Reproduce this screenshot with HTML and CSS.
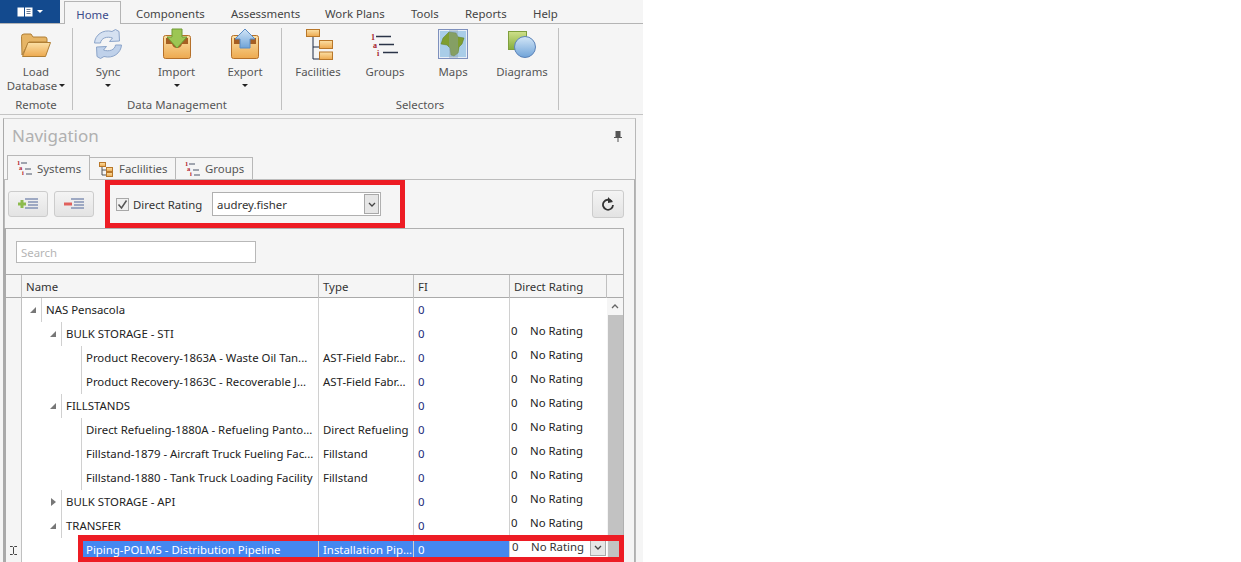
FILE: index.html
```html
<!DOCTYPE html>
<html>
  <head>
    <title>Navigation</title>
    <meta charset="UTF-8">
    <link rel="stylesheet" href="styles.css">
  </head>

  <body>
    <svg class="defs" width="0" height="0">
      <defs>
        <linearGradient id="gold" x1="0" y1="0" x2="0" y2="1">
          <stop offset="0" stop-color="#fbe0a6"/>
          <stop offset="1" stop-color="#eda94f"/>
        </linearGradient>
        <linearGradient id="sky" x1="0" y1="0" x2="0" y2="1">
          <stop offset="0" stop-color="#d3e6f7"/>
          <stop offset="1" stop-color="#6fa3d8"/>
        </linearGradient>
        <linearGradient id="leaf" x1="0" y1="0" x2="0" y2="1">
          <stop offset="0" stop-color="#cfe08a"/>
          <stop offset="1" stop-color="#84ad3d"/>
        </linearGradient>
        <symbol id="mini-list" viewBox="0 0 16 16">
          <text x="1" y="5" class="mini-num">1</text>
          <text x="3" y="10" class="mini-num">a</text>
          <text x="6" y="15" class="mini-num">i</text>
          <path d="M5 3h6M9 9h6M10 14h6" stroke="#4a5568" stroke-width="1" fill="none"/>
        </symbol>
        <symbol id="mini-tree" viewBox="0 0 16 16">
          <path d="M4 5v9h4M4 9h4" stroke="#555" fill="none"/>
          <rect x="1.5" y="1.5" width="6" height="4" fill="url(#gold)" stroke="#b8772a"/>
          <rect x="8.5" y="6.5" width="6" height="4" fill="url(#gold)" stroke="#b8772a"/>
          <rect x="8.5" y="11.5" width="6" height="4" fill="url(#gold)" stroke="#b8772a"/>
        </symbol>
      </defs>
    </svg>

    <div class="app">
      <div class="menu-bar">
        <div class="app-button">
          <svg width="16" height="10" viewBox="0 0 16 10">
            <rect x="0.5" y="0.5" width="15" height="9" fill="#fff"/>
            <path d="M7.5 0v10" stroke="#134a8e"/>
            <path d="M9.5 2.5h4M9.5 4.5h4M9.5 6.5h4" stroke="#6c7a90"/>
          </svg>
          <span class="arrow-white"></span>
        </div>
        <div class="menu-tab menu-tab-active">Home</div>
        <div class="menu-tab tab-components">Components</div>
        <div class="menu-tab tab-assessments">Assessments</div>
        <div class="menu-tab tab-plans">Work Plans</div>
        <div class="menu-tab tab-tools">Tools</div>
        <div class="menu-tab tab-reports">Reports</div>
        <div class="menu-tab tab-help">Help</div>
      </div>

      <div class="ribbon">
        <div class="group group-remote">
          <div class="group-buttons">
            <div class="rb rb-load">
              <svg class="rb-icon" viewBox="0 0 32 32">
                <path d="M2 27 1.500 8.500Q1.500 6 4 6h7l2 3h12q2 0 2 2v3H9z" fill="#e6b566" stroke="#b07f35"/>
                <path d="M2.500 28.500 8 14.500h22.500L25.500 28.500z" fill="url(#gold)" stroke="#b07f35"/>
              </svg>
              <div class="rb-label">Load</div>
              <div class="rb-label">Database<span class="arrow inline-arrow"></span></div>
            </div>
          </div>
          <div class="group-name">Remote</div>
        </div>

        <div class="group group-data">
          <div class="group-buttons">
            <div class="rb rb-sync">
              <svg class="rb-icon" viewBox="0 0 32 32">
                <path d="M2.500 15C3 7 11 1 20 3.500L23.500 1.500 27 3.500 27.500 13 17.500 13.500 20.500 10C15 8 9 10 8.500 15z" fill="#d5e1f1" stroke="#8ba4c9"/>
                <path d="M29.500 17C29 25 21 31 12 28.500L8.500 30.500 5 28.500 4.500 19 14.500 18.500 11.500 22C17 24 23 22 23.500 17z" fill="#bfd1ea" stroke="#8ba4c9"/>
              </svg>
              <div class="rb-label">Sync</div>
              <span class="arrow"></span>
            </div>
            <div class="rb rb-import">
              <svg class="rb-icon" viewBox="0 0 32 32">
                <rect x="2.500" y="7.500" width="27" height="23" rx="2" fill="url(#gold)" stroke="#b5702a"/>
                <path d="M5 10h22v6h-6q-1 4-5 4t-5-4H5z" fill="#a65f22"/>
                <path d="M11 1h10v8h5L16 20 6 9h5z" fill="#9cc653" stroke="#6f9a35"/>
              </svg>
              <div class="rb-label">Import</div>
              <span class="arrow"></span>
            </div>
            <div class="rb rb-export">
              <svg class="rb-icon" viewBox="0 0 32 32">
                <rect x="2.500" y="7.500" width="27" height="23" rx="2" fill="url(#gold)" stroke="#b5702a"/>
                <path d="M5 10h22v6h-6q-1 4-5 4t-5-4H5z" fill="#a65f22"/>
                <path d="M16 1 26 11h-5v9H11v-9H6z" fill="url(#sky)" stroke="#5b8cc4"/>
              </svg>
              <div class="rb-label">Export</div>
              <span class="arrow"></span>
            </div>
          </div>
          <div class="group-name">Data Management</div>
        </div>

        <div class="group group-selectors">
          <div class="group-buttons">
            <div class="rb rb-fac">
              <svg class="rb-icon" viewBox="0 0 32 32">
                <path d="M11 8v23h6M11 19h6" stroke="#1f2a44" fill="none"/>
                <rect x="4.500" y="1.500" width="13" height="7" fill="url(#gold)" stroke="#b8772a"/>
                <rect x="17.500" y="12.500" width="13" height="8" fill="url(#gold)" stroke="#b8772a"/>
                <rect x="17.500" y="24" width="13" height="7.500" fill="url(#gold)" stroke="#b8772a"/>
              </svg>
              <div class="rb-label">Facilities</div>
            </div>
            <div class="rb rb-groups">
              <svg class="rb-icon" viewBox="0 0 32 32">
                <text x="2" y="12" class="big-num">1</text>
                <text x="4" y="20" class="big-num">a</text>
                <text x="8" y="28" class="big-num">i</text>
                <path d="M7 8.500h15M10 16.500h15M14 24.500h15" stroke="#2b3448" stroke-width="1.600" fill="none"/>
              </svg>
              <div class="rb-label">Groups</div>
            </div>
            <div class="rb rb-maps">
              <svg class="rb-icon" viewBox="0 0 32 32">
                <rect x="1.500" y="1.500" width="29" height="29" fill="#e8eef6" stroke="#7e90bd"/>
                <rect x="3" y="3" width="26" height="26" fill="#a9cde8"/>
                <path d="M6 10 12 4l7 1 2 4 6 1-2 6-3 3-1 6-4 3-3-1-1-7-3-3-6-1z" fill="#7f9e2f" stroke="#5d7a1e" stroke-width="0.500"/>
                <rect x="12" y="2" width="9" height="28" fill="#8f9fb5" opacity="0.4"/>
              </svg>
              <div class="rb-label">Maps</div>
            </div>
            <div class="rb rb-diagrams">
              <svg class="rb-icon" viewBox="0 0 32 32">
                <rect x="2.500" y="3.500" width="18" height="18" fill="url(#leaf)" stroke="#7f9f3d"/>
                <circle cx="19" cy="19" r="10.500" fill="url(#sky)" stroke="#5b82b8"/>
              </svg>
              <div class="rb-label">Diagrams</div>
            </div>
          </div>
          <div class="group-name">Selectors</div>
        </div>
      </div>

      <div class="panel">
        <div class="panel-head">
          <span class="panel-title">Navigation</span>
          <svg class="pin" width="8" height="11" viewBox="0 0 8 11">
            <path d="M1.500 0h5v6h-5zM0 6h8v1H0zM3.500 7h1v4h-1z" fill="#555"/>
          </svg>
        </div>

        <div class="nav-tabs">
          <div class="nav-tab nav-tab-active">
            <svg class="mini" width="16" height="16"><use href="#mini-list"/></svg>Systems
          </div>
          <div class="nav-tab">
            <svg class="mini" width="16" height="16"><use href="#mini-tree"/></svg>Faclilities
          </div>
          <div class="nav-tab">
            <svg class="mini" width="16" height="16"><use href="#mini-list"/></svg>Groups
          </div>
        </div>

        <div class="nav-content">
          <div class="toolbar">
            <div class="tool-btn">
              <svg width="24" height="14" viewBox="0 0 24 14">
                <path d="M2 7h8M6 3v8" stroke="#8dbb4e" stroke-width="3"/>
                <path d="M9 2h13M12 5h10M12 8h10M9 11h13" stroke="#8493b5" stroke-width="1.500"/>
              </svg>
            </div>
            <div class="tool-btn">
              <svg width="24" height="14" viewBox="0 0 24 14">
                <path d="M2 7h8" stroke="#e0605c" stroke-width="3"/>
                <path d="M9 2h13M12 5h10M12 8h10M9 11h13" stroke="#8493b5" stroke-width="1.500"/>
              </svg>
            </div>
            <div class="rating-filter">
              <span class="check">
                <svg width="11" height="11" viewBox="0 0 11 11"><path d="M1.500 5.500 4.500 9 9.500 1.500" stroke="#555" stroke-width="1.500" fill="none"/></svg>
              </span>
              <span class="check-label">Direct Rating</span>
              <div class="user-select">
                <span>audrey.fisher</span>
                <span class="select-btn">
                  <svg width="8" height="5" viewBox="0 0 8 5"><path d="M1 1 4 4 7 1" stroke="#444" stroke-width="1.300" fill="none"/></svg>
                </span>
              </div>
            </div>
            <div class="refresh-btn">
              <svg width="14" height="14" viewBox="0 0 14 14">
                <path d="M10.800 4.500A5 5 0 1 0 12 8" stroke="#333" stroke-width="1.800" fill="none"/>
                <path d="M7 0v6l5-1z" fill="#333"/>
              </svg>
            </div>
          </div>

          <div class="search-row">
            <div class="search">Search</div>
          </div>

          <div class="grid">
            <div class="grid-head">
              <div class="hc"></div>
              <div class="hc">Name</div>
              <div class="hc">Type</div>
              <div class="hc">FI</div>
              <div class="hc">Direct Rating</div>
              <div class="hc hc-end"></div>
            </div>
            <div class="grid-body">
              <div class="rows">
                <div class="row">
                  <div class="rh"></div>
                  <div class="name"><span class="exp exp-open l0"></span><span class="nm">NAS Pensacola</span></div>
                  <div class="cell"></div>
                  <div class="cell fi">0</div>
                  <div class="cell dr"></div>
                </div>
                <div class="row">
                  <div class="rh"></div>
                  <div class="name"><span class="exp exp-open l1"></span><span class="nm">BULK STORAGE - STI</span></div>
                  <div class="cell"></div>
                  <div class="cell fi">0</div>
                  <div class="cell dr"><span class="dr-num">0</span><span class="dr-text">No Rating</span></div>
                </div>
                <div class="row">
                  <div class="rh"></div>
                  <div class="name"><span class="exp l2"></span><span class="nm">Product Recovery-1863A - Waste Oil Tan...</span></div>
                  <div class="cell">AST-Field Fabr...</div>
                  <div class="cell fi">0</div>
                  <div class="cell dr"><span class="dr-num">0</span><span class="dr-text">No Rating</span></div>
                </div>
                <div class="row">
                  <div class="rh"></div>
                  <div class="name"><span class="exp l2"></span><span class="nm">Product Recovery-1863C - Recoverable J...</span></div>
                  <div class="cell">AST-Field Fabr...</div>
                  <div class="cell fi">0</div>
                  <div class="cell dr"><span class="dr-num">0</span><span class="dr-text">No Rating</span></div>
                </div>
                <div class="row">
                  <div class="rh"></div>
                  <div class="name"><span class="exp exp-open l1"></span><span class="nm">FILLSTANDS</span></div>
                  <div class="cell"></div>
                  <div class="cell fi">0</div>
                  <div class="cell dr"><span class="dr-num">0</span><span class="dr-text">No Rating</span></div>
                </div>
                <div class="row">
                  <div class="rh"></div>
                  <div class="name"><span class="exp l2"></span><span class="nm">Direct Refueling-1880A - Refueling Panto...</span></div>
                  <div class="cell">Direct Refueling</div>
                  <div class="cell fi">0</div>
                  <div class="cell dr"><span class="dr-num">0</span><span class="dr-text">No Rating</span></div>
                </div>
                <div class="row">
                  <div class="rh"></div>
                  <div class="name"><span class="exp l2"></span><span class="nm">Fillstand-1879 - Aircraft Truck Fueling Fac...</span></div>
                  <div class="cell">Fillstand</div>
                  <div class="cell fi">0</div>
                  <div class="cell dr"><span class="dr-num">0</span><span class="dr-text">No Rating</span></div>
                </div>
                <div class="row">
                  <div class="rh"></div>
                  <div class="name"><span class="exp l2"></span><span class="nm">Fillstand-1880 - Tank Truck Loading Facility</span></div>
                  <div class="cell">Fillstand</div>
                  <div class="cell fi">0</div>
                  <div class="cell dr"><span class="dr-num">0</span><span class="dr-text">No Rating</span></div>
                </div>
                <div class="row">
                  <div class="rh"></div>
                  <div class="name"><span class="exp exp-closed l1"></span><span class="nm">BULK STORAGE - API</span></div>
                  <div class="cell"></div>
                  <div class="cell fi">0</div>
                  <div class="cell dr"><span class="dr-num">0</span><span class="dr-text">No Rating</span></div>
                </div>
                <div class="row">
                  <div class="rh"></div>
                  <div class="name"><span class="exp exp-open l1"></span><span class="nm">TRANSFER</span></div>
                  <div class="cell"></div>
                  <div class="cell fi">0</div>
                  <div class="cell dr"><span class="dr-num">0</span><span class="dr-text">No Rating</span></div>
                </div>
                <div class="row row-selected">
                  <div class="rh">
                    <svg width="7" height="9" viewBox="0 0 7 9"><path d="M0 .5h2.500L3.500 1.500 4.500.5H7M3.500 1.500v6M0 8.500h2.500L3.500 7.500 4.500 8.500H7" stroke="#444" fill="none"/></svg>
                  </div>
                  <div class="name"><span class="exp l2"></span><span class="nm">Piping-POLMS - Distribution Pipeline</span></div>
                  <div class="cell">Installation Pip...</div>
                  <div class="cell fi">0</div>
                  <div class="cell dr dr-edit">
                    <span class="dr-num">0</span><span class="dr-text">No Rating</span>
                    <span class="dr-btn">
                      <svg width="8" height="5" viewBox="0 0 8 5"><path d="M1 1 4 4 7 1" stroke="#444" stroke-width="1.300" fill="none"/></svg>
                    </span>
                  </div>
                </div>
              </div>
              <div class="scrollbar">
                <div class="scroll-up">
                  <svg width="8" height="5" viewBox="0 0 8 5"><path d="M1 4 4 1 7 4" stroke="#666" stroke-width="1.300" fill="none"/></svg>
                </div>
                <div class="scroll-thumb"></div>
              </div>
            </div>
          </div>
        </div>
      </div>

      <div class="mark mark-filter"></div>
      <div class="mark mark-row"></div>
    </div>
  </body>
</html>
```

FILE: styles.css
```css
html, body {
  margin: 0;
  height: 562px;
  overflow: hidden;
  background-color: #fff;
}

.defs {
  display: block;
  height: 0;
}

.app {
  position: relative;
  width: 643px;
  height: 562px;
  overflow: hidden;
  background-color: #f5f5f5;
  font-family: "Noto Sans", sans-serif;
  font-size: 11.4px;
  color: #333;
}

/* top menu */
.menu-bar {
  display: flex;
  height: 23px;
  border-bottom: 1px solid #b4b4b4;
}

.app-button {
  width: 60px;
  height: 23px;
  background-color: #134a8e;
  display: flex;
  align-items: center;
  justify-content: center;
  gap: 4px;
}

.arrow-white {
  border: 3px solid transparent;
  border-top-color: #fff;
  border-bottom-width: 0;
}

.menu-tab {
  height: 23px;
  line-height: 28px;
  font-size: 11.4px;
  color: #444;
}

.menu-tab-active {
  margin: 1px 0 -1px 4px;
  width: 57px;
  height: 23px;
  line-height: 26px;
  box-sizing: border-box;
  text-align: center;
  color: #3a4a8a;
  background-color: #f5f5f5;
  border: 1px solid #b4b4b4;
  border-bottom: 0;
}

.tab-components { margin-left: 15px; width: 95px; }
.tab-assessments { width: 94px; }
.tab-plans { width: 86px; }
.tab-tools { width: 54px; }
.tab-reports { width: 68px; }
.tab-help { width: 40px; }

/* ribbon */
.ribbon {
  display: flex;
  height: 91px;
  box-sizing: border-box;
  padding-top: 4px;
  border-bottom: 1px solid #c4c4c4;
}

.group {
  display: flex;
  flex-direction: column;
  height: 82px;
  box-sizing: border-box;
  border-right: 1px solid #c0c0c0;
}

.group-remote { width: 73px; }
.group-data { width: 209px; }
.group-selectors { width: 277px; padding-left: 2px; }
.group-selectors .group-name { margin-left: -2px; }

.group-buttons {
  display: flex;
  flex: 1;
}

.group-name {
  height: 18px;
  margin-bottom: -4px;
  line-height: 18px;
  text-align: center;
  color: #555;
}

.rb {
  display: flex;
  flex-direction: column;
  align-items: center;
  flex: none;
  color: #555;
}

.rb-load { width: 72px; }
.rb-sync { width: 70px; }
.rb-import { width: 67px; }
.rb-export { width: 70px; }
.rb-fac { width: 68px; }
.rb-groups { width: 66px; }
.rb-maps { width: 70px; }
.rb-diagrams { width: 68px; }

.rb-icon {
  width: 32px;
  height: 32px;
  margin-bottom: 5px;
}

.rb-label {
  height: 14px;
  line-height: 14px;
  white-space: nowrap;
}

.arrow {
  display: inline-block;
  margin-top: 5px;
  border: 3px solid transparent;
  border-top-color: #222;
  border-bottom-width: 0;
}

.inline-arrow {
  margin: 0 0 2px 2px;
  vertical-align: middle;
}

.big-num {
  font-family: "Liberation Serif", serif;
  font-size: 8px;
  font-weight: bold;
  fill: #a3202a;
}

.mini-num {
  font-family: "Liberation Serif", serif;
  font-size: 6.5px;
  font-weight: bold;
  fill: #b3202a;
}

/* navigation panel */
.panel {
  margin: 3px 7px 0 3px;
  height: 443px;
  border-top: 1px solid #cfcfcf;
  border-left: 1px solid #aaa;
  border-right: 1px solid #b8b8b8;
}

.panel-head {
  display: flex;
  align-items: center;
  justify-content: space-between;
  height: 36px;
  padding: 0 13px 4px 8px;
  box-sizing: border-box;
}

.panel-title {
  font-size: 17px;
  color: #b0b0b0;
}

.pin {
  margin-top: 2px;
}

.nav-tabs {
  display: flex;
  align-items: flex-end;
  height: 24px;
  padding-left: 3px;
}

.nav-tab {
  display: flex;
  align-items: center;
  gap: 5px;
  height: 22px;
  padding: 0 6px 0 8px;
  box-sizing: border-box;
  border: 1px solid #b8b8b8;
  border-left: 0;
  border-bottom: 0;
  color: #555;
}

.nav-tab:nth-child(2) { width: 86px; }
.nav-tab:nth-child(3) { width: 77px; }

.nav-tab-active {
  width: 83px;
  height: 25px;
  margin-bottom: -1px;
  border-left: 1px solid #b8b8b8;
  background-color: #f5f5f5;
  position: relative;
}

.mini {
  flex: none;
}

.nav-content {
  border-top: 1px solid #bcbcbc;
  height: 382px;
  border-right: 1px solid #b0b0b0;
}

.toolbar {
  display: flex;
  align-items: center;
  height: 48px;
  box-sizing: border-box;
  padding: 0 10px 0 3px;
  border-left: 1px solid #bbb;
}

.tool-btn, .refresh-btn {
  display: flex;
  align-items: center;
  justify-content: center;
  box-sizing: border-box;
  border: 1px solid #ccc;
  border-radius: 3px;
  background: linear-gradient(#f4f4f4, #e3e3e3);
}

.tool-btn {
  width: 40px;
  height: 26px;
  margin-right: 6px;
}

.rating-filter {
  display: flex;
  align-items: center;
  margin-left: 16px;
  width: 265px;
  height: 25px;
}

.check {
  display: flex;
  align-items: center;
  justify-content: center;
  width: 13px;
  height: 13px;
  border: 1px solid #a8a8a8;
  background-color: #f0f0f0;
  box-sizing: border-box;
}

.check-label {
  margin-left: 4px;
  width: 79px;
  white-space: nowrap;
}

.user-select {
  display: flex;
  align-items: center;
  justify-content: space-between;
  width: 169px;
  height: 24px;
  box-sizing: border-box;
  border: 1px solid #b0b0b0;
  background-color: #fff;
  padding: 1px 1px 1px 4px;
}

.select-btn {
  display: flex;
  align-items: center;
  justify-content: center;
  width: 15px;
  height: 20px;
  box-sizing: border-box;
  border: 1px solid #a8a8a8;
  background-color: #e6e6e6;
}

.refresh-btn {
  margin-left: auto;
  width: 32px;
  height: 28px;
}

.search-row {
  height: 46px;
  margin-right: 10px;
  box-sizing: border-box;
  padding: 12px 0 0 10px;
  border-top: 1px solid #b0b0b0;
  border-right: 1px solid #b0b0b0;
  border-left: 2px solid #aaa;
}

.search {
  width: 240px;
  height: 22px;
  line-height: 22px;
  padding-left: 4px;
  box-sizing: border-box;
  border: 1px solid #b8b8b8;
  background-color: #fff;
  color: #b5b5b5;
}

/* data grid */
.grid {
  margin-right: 10px;
  border-top: 1px solid #aaa;
  border-left: 2px solid #aaa;
  border-right: 1px solid #b0b0b0;
}

.grid-head {
  display: grid;
  grid-template-columns: 16px 297px 95px 96px 97px 16px;
  height: 23px;
  box-sizing: border-box;
  border-bottom: 1px solid #aaa;
}

.hc {
  line-height: 23px;
  padding-left: 4px;
  box-sizing: border-box;
  border-right: 1px solid #c0c0c0;
  color: #333;
}

.hc-end {
  border-right: 0;
}

.grid-body {
  display: flex;
}

.rows {
  width: 601px;
}

.row {
  display: grid;
  grid-template-columns: 16px 297px 95px 96px 97px;
  height: 24px;
  box-sizing: border-box;
  color: #222;
}

.rh {
  display: flex;
  align-items: center;
  justify-content: center;
  box-sizing: border-box;
  background-color: #f5f5f5;
  border-right: 1px solid #c0c0c0;
  border-bottom: 1px solid #d0d0d0;
}

.name {
  display: flex;
  background-color: #fff;
}

.exp {
  display: flex;
  align-items: center;
  justify-content: center;
  flex: none;
  height: 24px;
  box-sizing: border-box;
}

.l0 { width: 19px; }
.l1 { width: 39px; }
.l2 { width: 59px; }

.exp-open::before {
  content: "";
  margin-left: auto;
  margin-right: 5px;
  border-style: solid;
  border-width: 0 0 6px 6px;
  border-color: transparent transparent #777 transparent;
}

.exp-closed::before {
  content: "";
  margin-left: auto;
  margin-right: 5px;
  border-style: solid;
  border-width: 4px 0 4px 5px;
  border-color: transparent transparent transparent #777;
}

.nm {
  flex: 1;
  padding-left: 4px;
  line-height: 24px;
  box-sizing: border-box;
  white-space: nowrap;
  overflow: hidden;
  border-left: 1px solid #d0d0d0;
  border-bottom: 1px solid #d0d0d0;
  border-right: 1px solid #d0d0d0;
}

.cell {
  padding-left: 4px;
  line-height: 24px;
  box-sizing: border-box;
  white-space: nowrap;
  overflow: hidden;
  background-color: #fff;
  border-right: 1px solid #d0d0d0;
  border-bottom: 1px solid #d0d0d0;
}

.fi {
  color: #1a2a7a;
}

.dr {
  display: flex;
  padding-left: 1px;
  line-height: 18px;
  border-right: 0;
}

.dr-num {
  width: 19px;
}

.row-selected .rh {
  border-bottom: 0;
}

.row-selected .nm,
.row-selected .cell {
  background-color: #4587f0;
  color: #fff;
  border-bottom: 0;
}

.row-selected .nm {
  padding-left: 5px;
  border-left: 0;
  border-right: 1px solid #d0d0d0;
}

.row-selected .dr-edit {
  background-color: #fff;
  color: #333;
  padding-left: 2px;
  position: relative;
}

.dr-btn {
  position: absolute;
  right: 1px;
  top: 1px;
  width: 16px;
  height: 17px;
  display: flex;
  align-items: center;
  justify-content: center;
  box-sizing: border-box;
  border: 1px solid #aaa;
  background-color: #e6e6e6;
}

.scrollbar {
  width: 16px;
  background-color: #f5f5f5;
}

.scroll-up {
  height: 17px;
  display: flex;
  align-items: center;
  justify-content: center;
}

.scroll-thumb {
  height: 247px;
  margin: 0 0 0 1px;
  background-color: #c2c2c2;
}

/* red highlights drawn over the screenshot */
.mark {
  position: absolute;
  box-sizing: border-box;
  border-style: solid;
  border-color: #ed1c24;
}

.mark-filter {
  left: 105px;
  top: 180px;
  width: 300px;
  height: 48px;
  border-width: 5px;
}

.mark-row {
  left: 78px;
  top: 535px;
  width: 546px;
  height: 27px;
  border-width: 6px 5px 5px;
}
```
